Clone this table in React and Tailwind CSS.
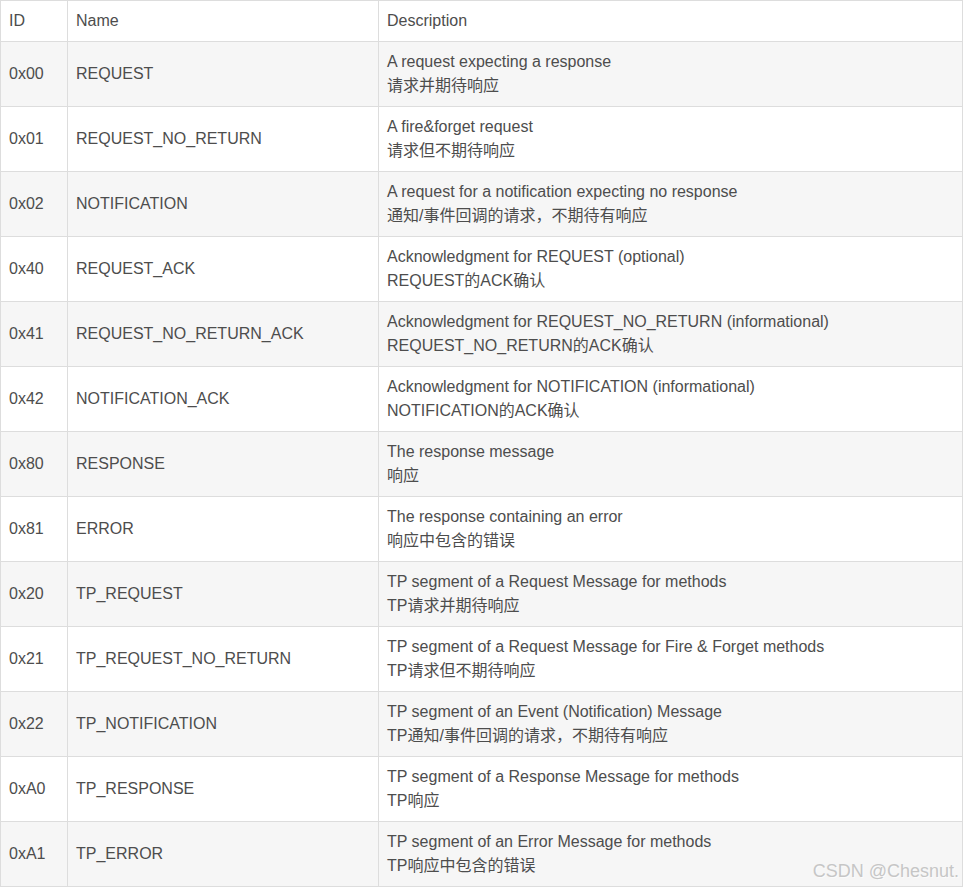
const rows = [
  ["0x00", "REQUEST", "A request expecting a response", "请求并期待响应"],
  ["0x01", "REQUEST_NO_RETURN", "A fire&forget request", "请求但不期待响应"],
  ["0x02", "NOTIFICATION", "A request for a notification expecting no response", "通知/事件回调的请求，不期待有响应"],
  ["0x40", "REQUEST_ACK", "Acknowledgment for REQUEST (optional)", "REQUEST的ACK确认"],
  ["0x41", "REQUEST_NO_RETURN_ACK", "Acknowledgment for REQUEST_NO_RETURN (informational)", "REQUEST_NO_RETURN的ACK确认"],
  ["0x42", "NOTIFICATION_ACK", "Acknowledgment for NOTIFICATION (informational)", "NOTIFICATION的ACK确认"],
  ["0x80", "RESPONSE", "The response message", "响应"],
  ["0x81", "ERROR", "The response containing an error", "响应中包含的错误"],
  ["0x20", "TP_REQUEST", "TP segment of a Request Message for methods", "TP请求并期待响应"],
  ["0x21", "TP_REQUEST_NO_RETURN", "TP segment of a Request Message for Fire & Forget methods", "TP请求但不期待响应"],
  ["0x22", "TP_NOTIFICATION", "TP segment of an Event (Notification) Message", "TP通知/事件回调的请求，不期待有响应"],
  ["0xA0", "TP_RESPONSE", "TP segment of a Response Message for methods", "TP响应"],
  ["0xA1", "TP_ERROR", "TP segment of an Error Message for methods", "TP响应中包含的错误"],
];

export default function App() {
  return (
    <div
      className="relative w-[963px] h-[887px] bg-white text-[16px] leading-[24px] text-[#4d4d4d]"
      style={{ fontFamily: '"Liberation Sans", Arial, "Noto Sans CJK SC", sans-serif' }}
    >
      <table className="table-fixed border-collapse w-[962px]">
        <colgroup>
          <col className="w-[67px]" />
          <col className="w-[311px]" />
          <col className="w-[584px]" />
        </colgroup>
        <thead>
          <tr className="bg-white">
            <th className="border border-[#dddddd] px-2 py-2 text-left font-normal align-middle">ID</th>
            <th className="border border-[#dddddd] px-2 py-2 text-left font-normal align-middle">Name</th>
            <th className="border border-[#dddddd] px-2 py-2 text-left font-normal align-middle">Description</th>
          </tr>
        </thead>
        <tbody>
          {rows.map((r, i) => (
            <tr key={r[0]} className={i % 2 === 0 ? "bg-[#f6f6f6]" : "bg-white"}>
              <td className="border border-[#dddddd] px-2 py-2 align-middle">{r[0]}</td>
              <td className="border border-[#dddddd] px-2 py-2 align-middle">{r[1]}</td>
              <td className="border border-[#dddddd] px-2 py-2 align-middle">
                <div>{r[2]}</div>
                <div>{r[3]}</div>
              </td>
            </tr>
          ))}
        </tbody>
      </table>
      <div
        className="absolute right-[4px] bottom-[6px] text-[18px] leading-[20px] text-[#c6c6c6]"
        style={{ textShadow: "1px 1px 0 rgba(255,255,255,0.6)" }}
      >
        CSDN @Chesnut.
      </div>
    </div>
  );
}
